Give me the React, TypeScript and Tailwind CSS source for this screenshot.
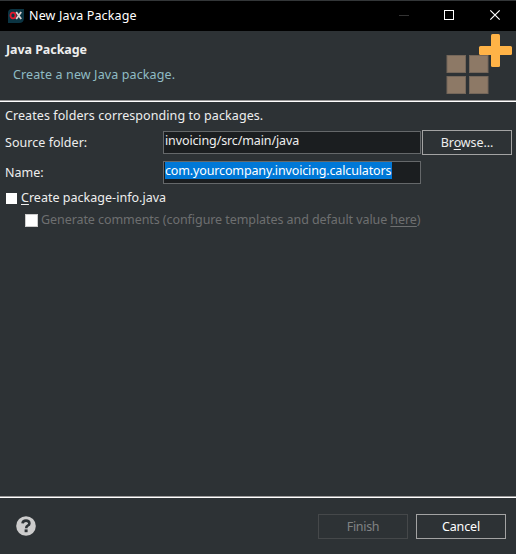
import React from "react";

const Divider = () => <div className="h-[2px] shrink-0 border-t border-[#9a9a9a] bg-white" />;

function HeaderArt() {
  return (
    <svg className="block h-[69px] w-[76px]" viewBox="440 31 76 69">
      <g fill="#8d7966" stroke="#75675a" strokeWidth="1">
        <rect x="447" y="55.5" width="18.5" height="17" />
        <rect x="469.5" y="55.5" width="18.5" height="17" />
        <rect x="447" y="76.5" width="18.5" height="17" />
        <rect x="469.5" y="76.5" width="18.5" height="17" />
      </g>
      <g fill="#ffb347">
        <rect x="491" y="34" width="9" height="33" rx="1.5" />
        <rect x="479" y="46" width="33" height="9" rx="1.5" />
      </g>
    </svg>
  );
}

export default function App() {
  return (
    <div className="flex h-[554px] w-[516px] flex-col overflow-hidden whitespace-nowrap bg-[#2d3235] font-['Noto_Sans','Noto_Sans_CJK_SC',sans-serif] text-[12.5px] leading-[18px] text-[#eeeeee]">
      <div className="h-px shrink-0 bg-[#333638]" />
      <header className="flex h-[30px] shrink-0 items-center bg-black pl-2 text-white">
        <svg className="h-4 w-4" viewBox="0 0 16 16">
          <path d="M4 1H16V10Q16 15 11 15H0V5Q0 1 4 1Z" fill="#0b3442" />
          <ellipse cx="5" cy="7.5" rx="2.5" ry="2.9" fill="none" stroke="#e0182d" strokeWidth="1.8" />
          <path d="M8.2 4L13.2 11M13.2 4L8.2 11" stroke="#d8cfcf" strokeWidth="1.8" />
        </svg>
        <h1 className="ml-[5px] tracking-[0.14px]">New Java Package</h1>
        <svg className="ml-auto h-[30px] w-[136px]" viewBox="380 1 136 30" fill="none">
          <path d="M399 15.5H409" stroke="#333333" />
          <rect x="444.5" y="10.5" width="9" height="9" stroke="#ffffff" />
          <path d="M490.3 10.3L499.7 19.7M499.7 10.3L490.3 19.7" stroke="#ffffff" strokeWidth="1.2" />
        </svg>
      </header>
      <section className="flex h-[69px] shrink-0 justify-between">
        <div className="pl-1.5 pt-[10px]">
          <h2 className="font-bold tracking-[-0.07px]">Java Package</h2>
          <p className="ml-[7px] mt-[7px] text-[#8fbcc4] tracking-[0.12px]">Create a new Java package.</p>
        </div>
        <HeaderArt />
      </section>
      <Divider />
      <main className="flex h-[394px] shrink-0 flex-col pl-[5px] pt-[5px]">
        <p className="tracking-[0.08px]">Creates folders corresponding to packages.</p>
        <div className="mt-[5px] flex h-[25px] items-center">
          <label className="w-[158px] tracking-[0.04px]">Source folder:</label>
          <div className="h-[23px] w-[258px] border border-[#65686a] bg-[#1b1e20] pl-px">
            <span className="block tracking-[-0.12px]">invoicing/src/main/java</span>
          </div>
          <button className="ml-px h-[25px] w-[90px] border border-[#a3a3a3] leading-[18px] tracking-[-0.1px]">
            Br<span className="underline underline-offset-2">o</span>wse...
          </button>
        </div>
        <div className="mt-[6px] flex h-[23px] items-center">
          <label className="w-[158px]">Name:</label>
          <div className="h-[23px] w-[258px] border border-[#65686a] bg-[#1b1e20] pl-px">
            <span className="block h-[17px] w-[227px] bg-[#0078d7] text-white tracking-[-0.14px]">com.yourcompany.invoicing.calculators</span>
          </div>
        </div>
        <div className="mt-[5px] flex h-[18px] items-center">
          <span className="ml-px mr-1 h-[11px] w-[11px] bg-white" />
          <span className="tracking-[0.02px]"><span className="underline underline-offset-2">C</span>reate package-info.java</span>
        </div>
        <div className="mt-[4px] flex h-[18px] items-center text-[#6d6f70]">
          <span className="ml-5 mr-[3px] h-[13px] w-[13px] border border-[#cccccc] bg-white" />
          <span className="tracking-[-0.07px]">Generate comments (configure templates and default value <span className="underline underline-offset-2">here</span>)</span>
        </div>
      </main>
      <Divider />
      <footer className="flex h-[56px] items-center pl-4 pr-[10px]">
        <svg className="h-5 w-5" viewBox="0 0 20 20">
          <circle cx="10" cy="10" r="9.8" fill="#cccccc" />
          <path d="M6.5 7.4Q6.8 4.6 10 4.6Q13.4 4.6 13.4 7.4Q13.4 8.8 11.7 9.6Q10.2 10.4 10.2 12.2" fill="none" stroke="#2d3235" strokeWidth="2.6" />
          <rect x="8.6" y="13.4" width="3" height="2.8" fill="#2d3235" />
        </svg>
        <button className="ml-auto mr-2 h-[25px] w-[90px] border border-[#45484a] pt-px text-[#808284] tracking-[-0.3px]">Finish</button>
        <button className="h-[25px] w-[90px] border border-[#a3a3a3] pt-px text-white tracking-[-0.15px]">Cancel</button>
      </footer>
    </div>
  );
}
